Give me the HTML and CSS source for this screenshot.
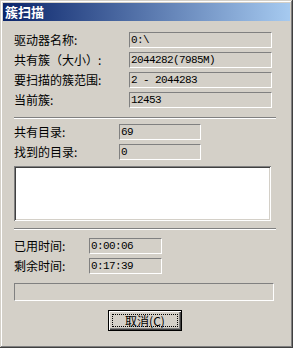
FILE: index.html
```html
<!DOCTYPE html>
<html lang="zh-CN">
<head>
    <meta charset="UTF-8">
    <title>簇扫描</title>
    <link rel="stylesheet" href="styles.css">
</head>
<body>
    <div class="window">
        <div class="titlebar">簇扫描</div>
        <div class="content">
            <div class="grid grid-drive">
                <span class="label">驱动器名称:</span><span class="field">0:\</span>
                <span class="label">共有簇（大小）:</span><span class="field">2044282(7985M)</span>
                <span class="label">要扫描的簇范围:</span><span class="field">2 - 2044283</span>
                <span class="label">当前簇:</span><span class="field">12453</span>
            </div>
            <div class="separator sep1"></div>
            <div class="grid grid-dirs">
                <span class="label">共有目录:</span><span class="field">69</span>
                <span class="label">找到的目录:</span><span class="field">0</span>
            </div>
            <div class="listbox"></div>
            <div class="separator sep2"></div>
            <div class="grid grid-time">
                <span class="label">已用时间:</span><span class="field">0:00:06</span>
                <span class="label">剩余时间:</span><span class="field">0:17:39</span>
            </div>
            <div class="progress"></div>
            <button class="btn" type="button"><span class="focus">取消(C)</span></button>
        </div>
    </div>
</body>
</html>
```

FILE: styles.css
```css
*{
    margin: 0;
    padding: 0;
    box-sizing: border-box;
}
body{
    background-color: #d4d0c8;
    font-family: "Noto Sans CJK SC", sans-serif;
    font-size: 12px;
    color: #000;
}
.window{
    width: 293px;
    height: 348px;
    padding: 3px;
    background-color: #d4d0c8;
    box-shadow: inset -1px -1px #404040, inset 1px 1px #d4d0c8,
                inset -2px -2px #808080, inset 2px 2px #fff;
}
.titlebar{
    height: 18px;
    line-height: 18px;
    padding-left: 2px;
    color: #fff;
    font-weight: bold;
    font-size: 13px;
    background: linear-gradient(to right, #0a246a, #a6caf0);
}
.content{
    padding-left: 11px;
    display: flex;
    flex-direction: column;
}
.grid{
    display: grid;
    row-gap: 4px;
    grid-auto-rows: 16px;
    align-items: center;
}
.grid-drive{
    margin-top: 11px;
    grid-template-columns: 115px 143px;
}
.grid-dirs{
    margin-top: 5px;
    grid-template-columns: 105px 82px;
}
.grid-time{
    margin-top: 8px;
    grid-template-columns: 75px 73px;
}
.label{
    line-height: 16px;
    white-space: nowrap;
}
.field{
    height: 16px;
    line-height: 14px;
    padding-left: 1px;
    border-top: 1px solid #808080;
    border-left: 1px solid #808080;
    border-right: 1px solid #fff;
    border-bottom: 1px solid #fff;
    font-family: "Liberation Mono", monospace;
    font-size: 11px;
    letter-spacing: -0.6px;
    white-space: nowrap;
}
.separator{
    width: 262px;
    height: 2px;
    border-top: 1px solid #808080;
    border-bottom: 1px solid #fff;
}
.sep1{
    margin-top: 9px;
}
.sep2{
    margin-top: 7px;
}
.listbox{
    margin-top: 6px;
    width: 257px;
    height: 55px;
    background-color: #fff;
    box-shadow: inset 1px 1px #808080, inset -1px -1px #fff,
                inset 2px 2px #404040, inset -2px -2px #d4d0c8;
}
.progress{
    margin-top: 9px;
    width: 260px;
    height: 18px;
    border-top: 1px solid #808080;
    border-left: 1px solid #808080;
    border-right: 1px solid #fff;
    border-bottom: 1px solid #fff;
}
.btn{
    margin-top: 9px;
    margin-left: 94px;
    width: 74px;
    height: 21px;
    padding: 3px;
    border: 1px solid #000;
    background-color: #d4d0c8;
    box-shadow: inset 1px 1px #fff, inset -1px -1px #404040,
                inset -2px -2px #808080;
    font-family: "Noto Sans CJK SC", sans-serif;
    font-size: 12px;
    color: #000;
    display: flex;
}
.focus{
    flex: 1;
    line-height: 11px;
    border: 1px dotted #000;
    text-align: center;
}
```
